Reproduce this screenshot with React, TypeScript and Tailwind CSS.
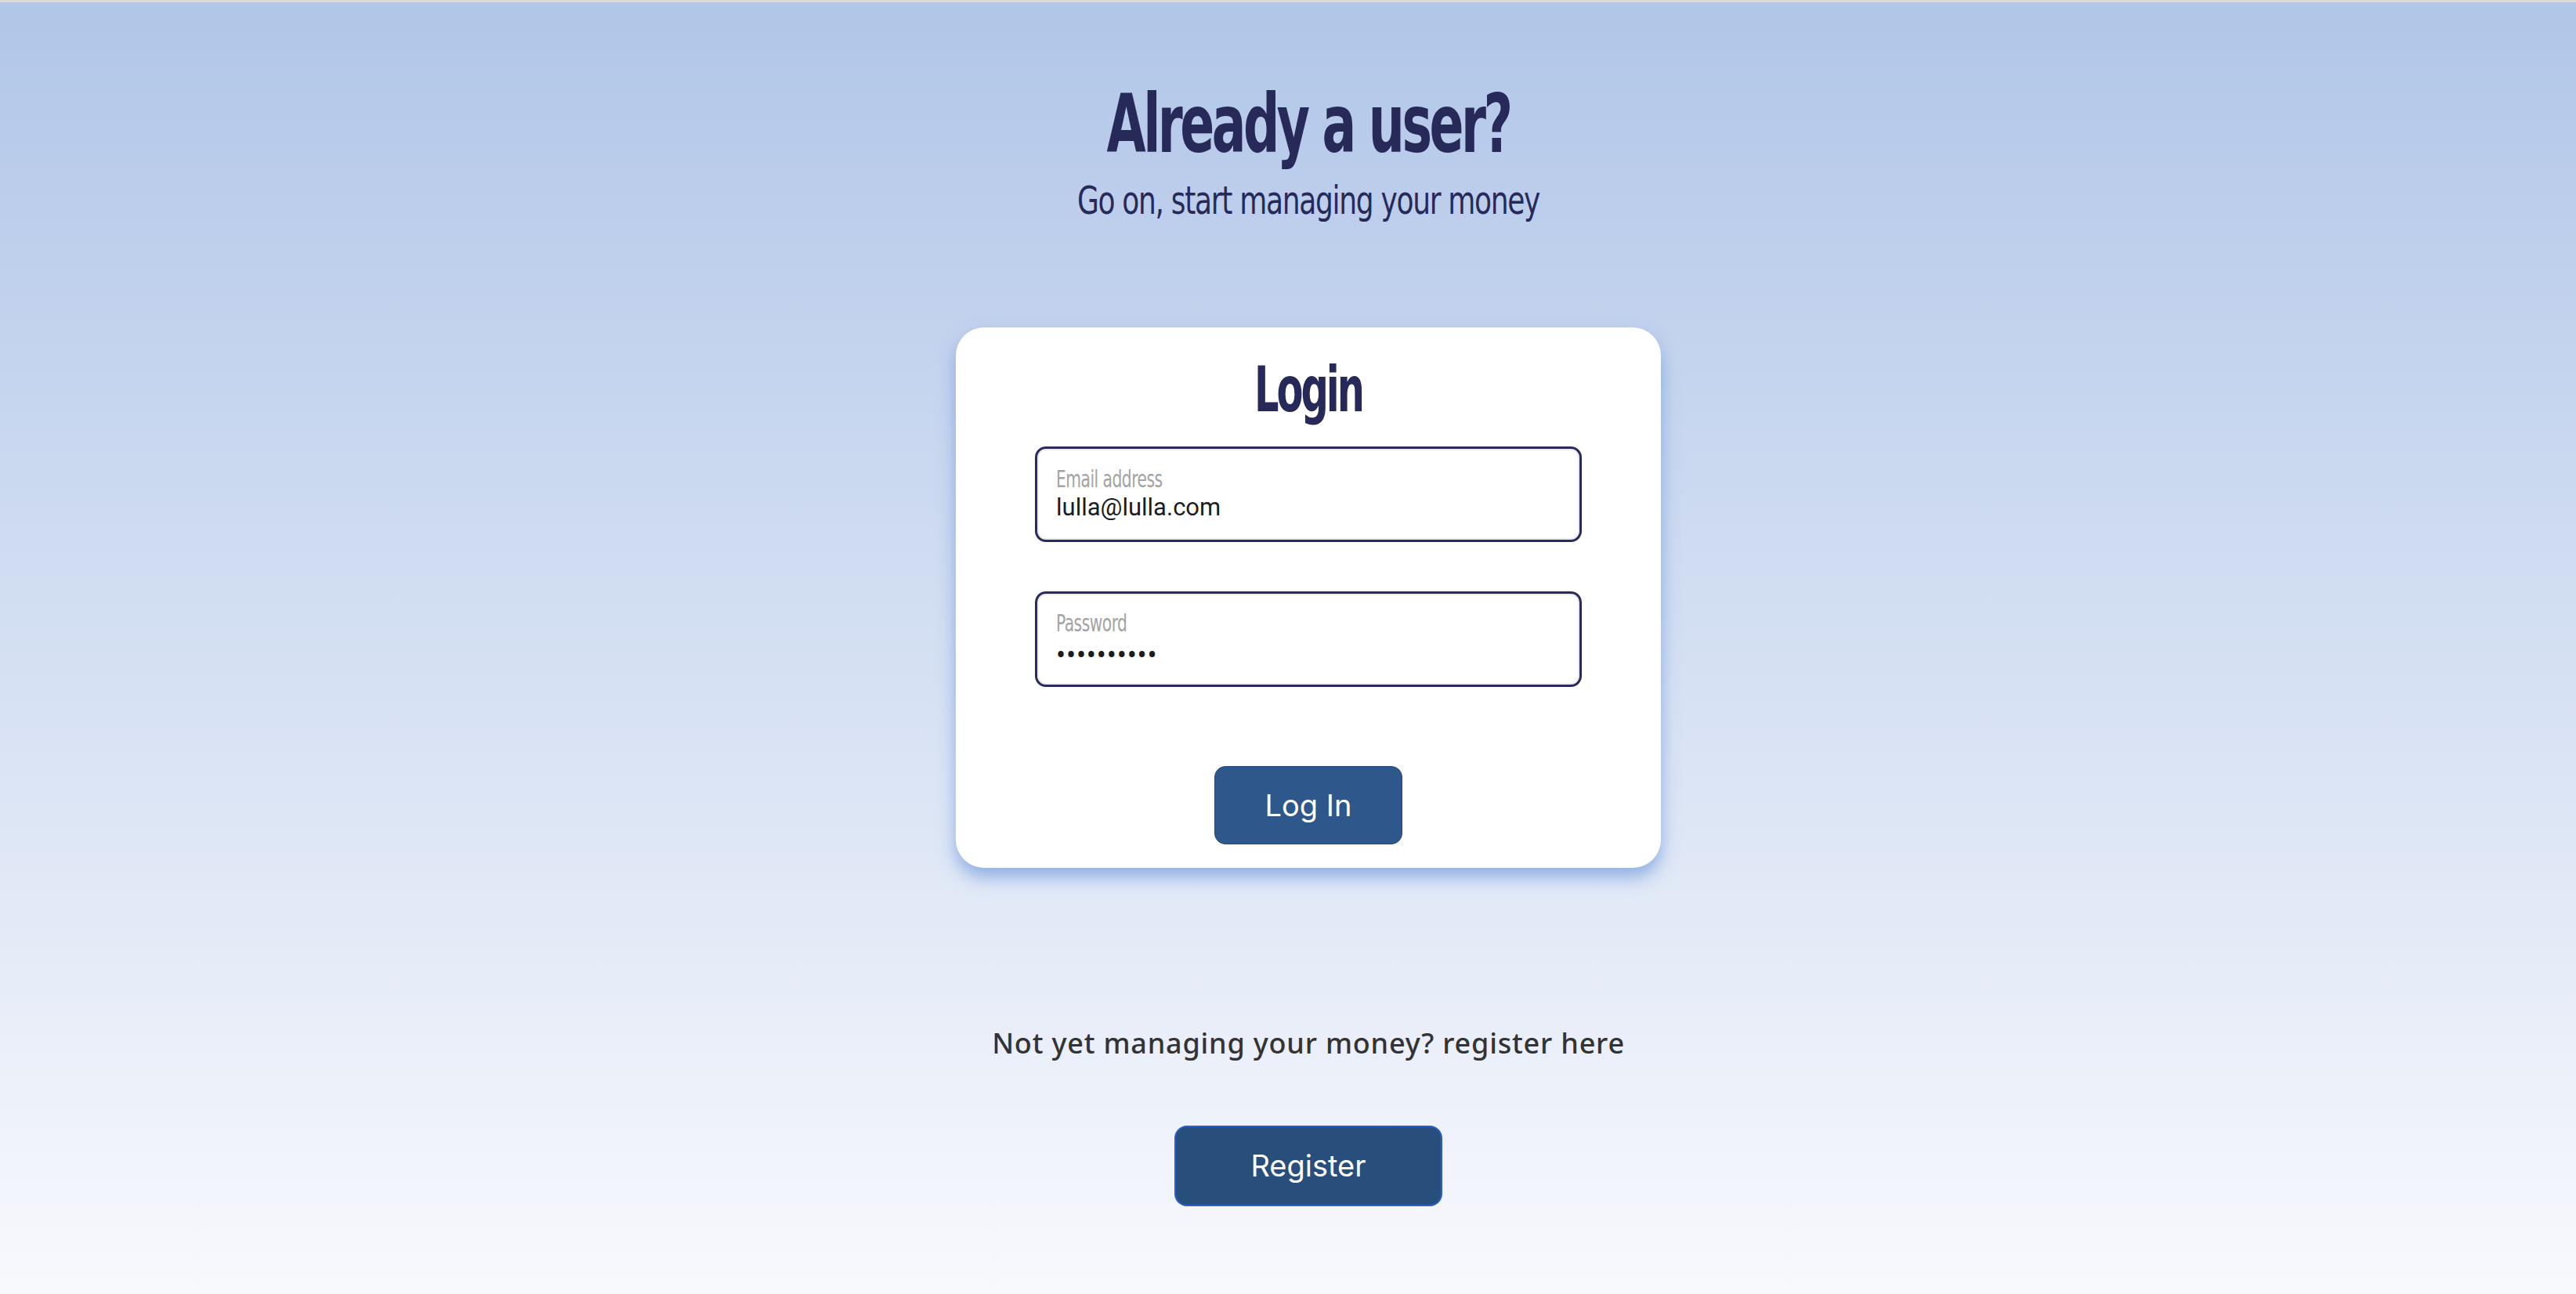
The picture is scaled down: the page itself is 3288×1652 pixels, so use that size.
import React from "react";

const condensed = "font-['DejaVu_Sans_Condensed','DejaVu_Sans',sans-serif]";

export default function App() {
  return (
    <div className="min-h-screen w-full border-t-[3px] border-[#dcdcdc] bg-gradient-to-b from-[#b1c6e8] to-[#f8f9fd] flex flex-col items-center pl-[52px]">
      <h1
        className={`mt-[113px] h-[84px] text-[72px] leading-[84px] font-bold tracking-[-3.5px] text-[#272a59] scale-y-[1.43] ${condensed}`}
      >
        Already a user?
      </h1>
      <p
        className={`mt-[32px] h-[48px] text-[40px] leading-[48px] tracking-[-1.3px] text-[#272a59] scale-y-[1.23] ${condensed}`}
      >
        Go on, start managing your money
      </p>

      <div className="mt-[138px] w-[900px] rounded-[36px] bg-white shadow-[0_12px_22px_rgba(110,150,220,0.7)] flex flex-col items-center pt-[47px] pb-[30px]">
        <h2
          className={`h-[64px] text-[55px] leading-[64px] font-bold tracking-[-3px] text-[#272a59] scale-y-[1.45] ${condensed}`}
        >
          Login
        </h2>

        <div className="mt-[41px] w-[698px] h-[122px] rounded-[14px] border-[3px] border-[#282b5c] bg-white shadow-[inset_0_0_0_2px_#ececec] flex flex-col pl-[24px] pt-[25px]">
          <span
            className={`h-[26px] text-[22.5px] leading-[26px] tracking-[-0.5px] text-[#a3a3a3] scale-y-[1.36] origin-left ${condensed}`}
          >
            Email address
          </span>
          <span className="mt-[6px] h-[36px] text-[31px] leading-[36px] text-[#1c1c1e] font-['Roboto',sans-serif]">
            lulla@lulla.com
          </span>
        </div>

        <div className="mt-[63px] w-[698px] h-[122px] rounded-[14px] border-[3px] border-[#282b5c] bg-white shadow-[inset_0_0_0_2px_#ececec] flex flex-col pl-[24px] pt-[24px]">
          <span
            className={`h-[26px] text-[22.5px] leading-[26px] tracking-[-0.5px] text-[#a3a3a3] scale-y-[1.36] origin-left ${condensed}`}
          >
            Password
          </span>
          <span className="mt-[9px] h-[40px] text-[36px] leading-[40px] tracking-[0.8px] text-[#1c1c1e] font-['Roboto',sans-serif]">
            ••••••••••
          </span>
        </div>

        <button className="mt-[101px] w-[240px] h-[100px] rounded-[14px] border border-[#27497a] bg-[#2e588c] text-white text-[38px] font-['Inter',sans-serif]">
          Log In
        </button>
      </div>

      <p className="mt-[204px] h-[40px] text-[36px] leading-[40px] font-medium tracking-[0.8px] text-[#333333] font-['Noto_Sans',sans-serif]">
        Not yet managing your money? register here
      </p>

      <button className="mt-[85px] w-[342px] h-[103px] rounded-[16px] border-2 border-[#2b5fcb] bg-[#284e7c] text-white text-[38px] font-['Inter',sans-serif]">
        Register
      </button>
    </div>
  );
}
